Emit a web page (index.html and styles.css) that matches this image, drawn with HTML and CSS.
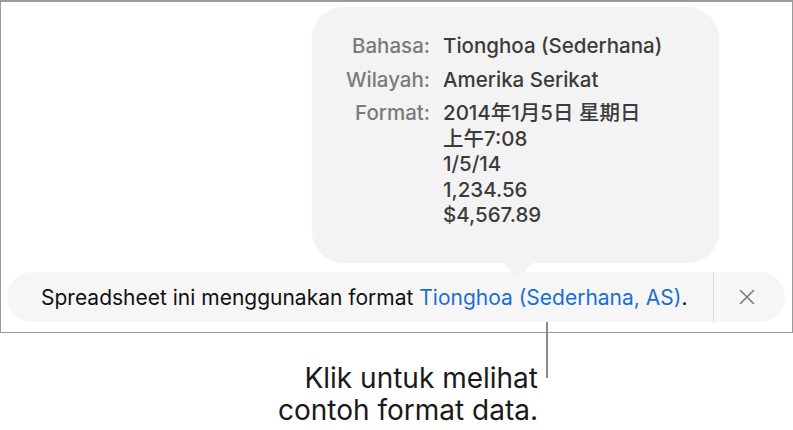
FILE: index.html
```html
<!DOCTYPE html>
<html lang="id">
<head>
    <meta charset="UTF-8">
    <meta name="viewport" content="width=device-width, initial-scale=1.0">
    <title>Format spreadsheet</title>
    <link rel="stylesheet" href="styles.css">
</head>
<body>
    <div class="frame">
        <div class="popover">
            <div class="info-grid">
                <span class="label">Bahasa:</span>
                <span class="value">Tionghoa (Sederhana)</span>
                <span class="label">Wilayah:</span>
                <span class="value">Amerika Serikat</span>
                <span class="label">Format:</span>
                <span class="value formats">
                    <span>2014年1月5日 星期日</span>
                    <span>上午7:08</span>
                    <span>1/5/14</span>
                    <span>1,234.56</span>
                    <span>$4,567.89</span>
                </span>
            </div>
            <svg class="arrow" width="42" height="18" viewBox="0 0 42 18">
                <path d="M0 0 L42 0 C36 0 33 2 29 8 L24 15 C22.5 17.5 19.5 17.5 18 15 L13 8 C9 2 6 0 0 0 Z" fill="#f3f3f3"/>
            </svg>
        </div>
        <div class="notice-bar">
            <p class="notice-text">Spreadsheet ini menggunakan format <a href="#" class="locale-link">Tionghoa (Sederhana, AS)</a>.</p>
            <button class="close-btn" aria-label="Tutup">
                <svg width="16" height="16" viewBox="0 0 16 16">
                    <path d="M1.5 1.5 L14.5 14.5 M14.5 1.5 L1.5 14.5" stroke="#7a7a7a" stroke-width="1.6" stroke-linecap="round"/>
                </svg>
            </button>
        </div>
    </div>
    <div class="leader"></div>
    <p class="callout">Klik untuk melihat<br>contoh format data.</p>
</body>
</html>
```

FILE: styles.css
```css
body {
  margin: 0;
  background: #fff;
  font-family: Inter, "Noto Sans CJK SC", sans-serif;
  position: relative;
}

.frame {
  position: relative;
  box-sizing: border-box;
  width: 793px;
  height: 333px;
  border: 1px solid #9b9b9b;
  border-top-width: 2px;
  display: flex;
  flex-direction: column;
  justify-content: flex-end;
  padding: 0 6px 10px;
}

.popover {
  position: absolute;
  left: 311px;
  top: 5px;
  width: 407px;
  height: 256px;
  box-sizing: border-box;
  background: #f3f3f3;
  border-radius: 32px;
  padding-top: 26px;
  box-shadow: 0 0 2px rgba(0, 0, 0, 0.04);
  z-index: 2;
}

.arrow {
  position: absolute;
  left: 185px;
  top: 255px;
}

.info-grid {
  display: grid;
  grid-template-columns: 118px auto;
  column-gap: 13px;
  row-gap: 8px;
  font-size: 20.5px;
  line-height: 25.5px;
  font-weight: 500;
}

.label {
  text-align: right;
  color: #7b7b7b;
}

.value {
  color: #3b3b3b;
}

.formats {
  display: flex;
  flex-direction: column;
}

.notice-bar {
  display: flex;
  align-items: center;
  height: 50px;
  background: #f6f6f6;
  border-radius: 25px;
  margin-right: 1px;
}

.notice-text {
  flex: 1;
  margin: 0;
  padding-left: 34px;
  font-size: 21px;
  color: #111;
}

.locale-link {
  color: #1b6ed6;
  text-decoration: none;
}

.close-btn {
  width: 72px;
  height: 50px;
  border: none;
  border-left: 1px solid #dcdcdc;
  background: none;
  padding: 0 6px 0 0;
  display: flex;
  align-items: center;
  justify-content: center;
}

.leader {
  position: absolute;
  left: 546px;
  top: 322px;
  width: 2px;
  height: 56px;
  background: #8a8a8a;
}

.callout {
  width: 538px;
  margin: 29px 0 0;
  text-align: right;
  font-size: 28px;
  line-height: 32px;
  color: #1a1a1a;
}
```
